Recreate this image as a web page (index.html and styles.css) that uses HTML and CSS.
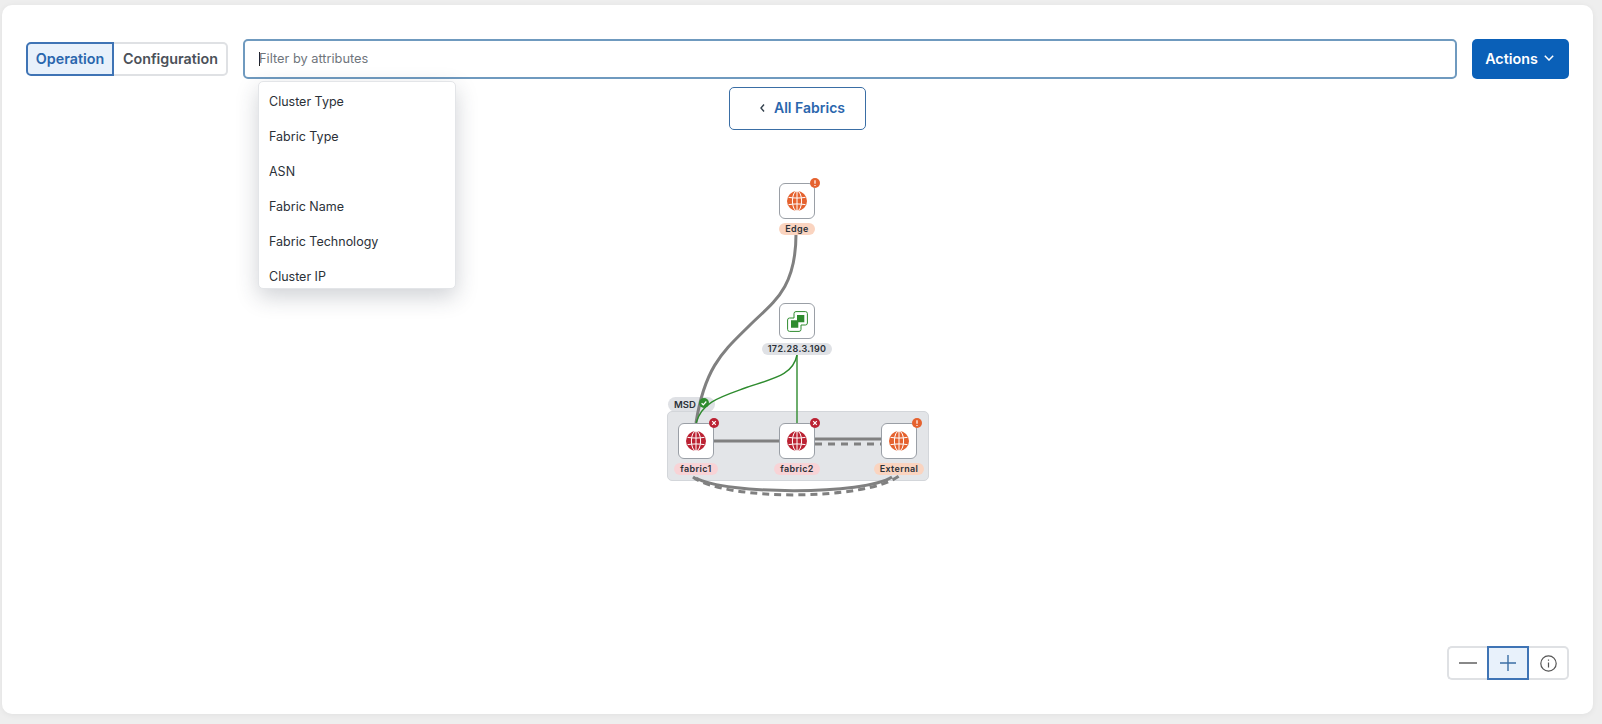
FILE: index.html
```html
<!DOCTYPE html>
<html lang="en">
<head>
  <meta charset="UTF-8" />
  <title>Fabrics topology</title>
  <link rel="stylesheet" href="styles.css">
</head>
<body>
  <svg class="defs" width="0" height="0">
    <symbol id="globe" viewBox="0 0 20 20">
      <circle cx="10" cy="10" r="10" fill="currentColor"/>
      <g fill="none" stroke="#fff" stroke-width="1">
        <ellipse cx="10" cy="10" rx="4.600" ry="10"/>
        <path d="M10 0v20M1.500 6.300c5 1 12 1 17 0M1.500 13.700c5-1 12-1 17 0"/>
      </g>
    </symbol>
    <symbol id="badge-x" viewBox="0 0 10 10">
      <circle cx="5" cy="5" r="5" fill="#bb2233"/>
      <path d="M3.200 3.200l3.600 3.600M6.800 3.200l-3.600 3.600" stroke="#fff" stroke-width="1.200"/>
    </symbol>
    <symbol id="badge-warn" viewBox="0 0 10 10">
      <circle cx="5" cy="5" r="5" fill="#e5622f"/>
      <path d="M5 2.200v3.600M5 6.900v1.100" stroke="#fff" stroke-width="1.200"/>
    </symbol>
  </svg>

  <main class="card">
    <div class="toolbar">
      <div class="segmented">
        <button class="seg seg-active">Operation</button>
        <button class="seg">Configuration</button>
      </div>
      <div class="filter">
        <span class="caret"></span>
        <span class="placeholder">Filter by attributes</span>
      </div>
      <button class="actions">
        Actions
        <svg width="10" height="6" viewBox="0 0 10 6"><path d="M.8 .8L5 5l4.200-4.200" fill="none" stroke="#fff" stroke-width="1.500"/></svg>
      </button>
    </div>

    <ul class="menu">
      <li>Cluster Type</li>
      <li>Fabric Type</li>
      <li>ASN</li>
      <li>Fabric Name</li>
      <li>Fabric Technology</li>
      <li>Cluster IP</li>
    </ul>

    <div class="back-row">
      <button class="back">
        <svg width="5" height="8" viewBox="0 0 5 8"><path d="M4 .5L1 4l3 3.500" fill="none" stroke="#33404d" stroke-width="1.400"/></svg>
        All Fabrics
      </button>
    </div>

    <div class="canvas">
      <div class="group-tag">MSD</div>
      <div class="group"></div>

      <svg class="links" viewBox="2 5 1591 709">
        <g fill="none" stroke="#808080" stroke-width="3">
          <path d="M796 234C796 290 772 303 750 325C725 350 705 365 696 423"/>
          <path d="M714 441H780"/>
          <path d="M815 439H881"/>
          <path d="M815 444H881" stroke-dasharray="7 6"/>
          <path d="M696 478C725 495 865 495 892 477"/>
          <path d="M693 477C725 501 865 501 899 476" stroke-dasharray="7 5"/>
        </g>
        <g fill="none" stroke="#2e8b2e" stroke-width="1.400">
          <path d="M797 355V423"/>
          <path d="M797 355C793 375 775 378 745 388C720 397 702 402 696 423"/>
        </g>
      </svg>

      <svg class="tag-check" viewBox="0 0 10 10">
        <circle cx="5" cy="5" r="5" fill="#2e8b2e"/>
        <path d="M2.600 5.200l1.700 1.600 3-3.300" fill="none" stroke="#fff" stroke-width="1.200"/>
      </svg>

      <div class="node node-edge">
        <div class="box box-warn">
          <svg class="globe"><use href="#globe"/></svg>
          <svg class="badge"><use href="#badge-warn"/></svg>
        </div>
        <span class="label label-warn">Edge</span>
      </div>

      <div class="node node-vcenter">
        <div class="box">
          <svg class="vc" viewBox="0 0 21 21">
            <path d="M9 .6h9.400a2 2 0 0 1 2 2V12a2 2 0 0 1-2 2H14v4.400a2 2 0 0 1-2 2H2.600a2 2 0 0 1-2-2V9a2 2 0 0 1 2-2H7V2.600a2 2 0 0 1 2-2z" fill="#fff" stroke="#2e8b2e" stroke-width="1"/>
            <path d="M10 4h7.300v7.300H11.300v5.400H4V9.300h6z" fill="#2e8b2e"/>
          </svg>
        </div>
        <span class="label label-grey">172.28.3.190</span>
      </div>

      <div class="node node-fabric1">
        <div class="box box-err">
          <svg class="globe"><use href="#globe"/></svg>
          <svg class="badge"><use href="#badge-x"/></svg>
        </div>
        <span class="label label-err">fabric1</span>
      </div>

      <div class="node node-fabric2">
        <div class="box box-err">
          <svg class="globe"><use href="#globe"/></svg>
          <svg class="badge"><use href="#badge-x"/></svg>
        </div>
        <span class="label label-err">fabric2</span>
      </div>

      <div class="node node-external">
        <div class="box box-warn">
          <svg class="globe"><use href="#globe"/></svg>
          <svg class="badge"><use href="#badge-warn"/></svg>
        </div>
        <span class="label label-warn">External</span>
      </div>
    </div>

    <div class="zoom">
      <button class="zoom-btn">
        <svg width="18" height="2" viewBox="0 0 18 2"><path d="M0 1h18" stroke="#555" stroke-width="1.400"/></svg>
      </button>
      <button class="zoom-btn zoom-active">
        <svg width="16" height="16" viewBox="0 0 16 16"><path d="M0 8h16M8 0v16" stroke="#3a6ea5" stroke-width="1.400"/></svg>
      </button>
      <button class="zoom-btn">
        <svg width="17" height="17" viewBox="0 0 17 17"><circle cx="8.500" cy="8.500" r="7.700" fill="none" stroke="#555" stroke-width="1.200"/><path d="M8.500 7.500v5M8.500 4.500v1.300" stroke="#555" stroke-width="1.200"/></svg>
      </button>
    </div>
  </main>
</body>
</html>
```

FILE: styles.css
```css
* {
  box-sizing: border-box;
}
body {
  margin: 0;
  height: 724px;
  overflow: hidden;
  background: #eeeeee;
  font-family: Inter, "Liberation Sans", sans-serif;
  color: #2b3138;
}
button {
  font-family: inherit;
  cursor: pointer;
}
.defs {
  position: absolute;
}
.card {
  position: relative;
  height: 709px;
  margin: 5px 9px 0 2px;
  padding: 34px 24px 0;
  background: #fff;
  border-radius: 10px;
  box-shadow: 0 1px 6px rgba(0, 0, 0, 0.06);
}
.toolbar {
  display: flex;
  align-items: center;
  gap: 15px;
  height: 40px;
}
.segmented {
  display: flex;
  height: 34px;
}
.seg {
  width: 114px;
  padding: 0 0 2px 1px;
  font-size: 14.300px;
  font-weight: 600;
  color: #4b5159;
  background: #fff;
  border: 2px solid #dfe1e4;
  border-left: none;
  border-radius: 0 5px 5px 0;
}
.seg-active {
  width: 88px;
  padding: 0 0 2px;
  color: #2a66ad;
  background: #e8f1fb;
  border: 2px solid #3f74b5;
  border-radius: 5px 0 0 5px;
}
.filter {
  flex: 1;
  display: flex;
  align-items: center;
  height: 40px;
  padding: 0 0 1px 14px;
  border: 2px solid #6f9abf;
  border-radius: 5px;
}
.caret {
  width: 1px;
  height: 14px;
  margin-right: -1px;
  background: #222;
}
.placeholder {
  font-size: 12.800px;
  color: #6f757c;
}
.actions {
  display: flex;
  align-items: center;
  justify-content: center;
  gap: 6px;
  width: 97px;
  height: 40px;
  padding: 0 2px 2px 0;
  font-size: 14.300px;
  font-weight: 600;
  color: #fff;
  background: #0a60b8;
  border: none;
  border-radius: 5px;
}
.menu {
  position: absolute;
  left: 256px;
  top: 76px;
  z-index: 2;
  width: 198px;
  height: 208px;
  margin: 0;
  padding: 2px 0 0 10px;
  overflow: hidden;
  list-style: none;
  font-size: 12.500px;
  background: #fff;
  border: 1px solid #e3e5e8;
  border-radius: 5px;
  box-shadow: 0 8px 22px rgba(40, 50, 70, 0.22);
}
.menu li {
  height: 35px;
  line-height: 35px;
}
.back-row {
  display: flex;
  justify-content: center;
  margin-top: 8px;
}
.back {
  display: flex;
  align-items: center;
  gap: 9px;
  width: 137px;
  height: 43px;
  padding: 0 0 2px 30px;
  font-size: 14px;
  font-weight: 600;
  color: #2a66ad;
  background: #fff;
  border: 1px solid #3a6ea5;
  border-radius: 5px;
}
.canvas {
  position: absolute;
  inset: 0;
  pointer-events: none;
}
.links {
  position: absolute;
  inset: 0;
  width: 100%;
  height: 100%;
}
.group {
  position: absolute;
  left: 665px;
  top: 406px;
  width: 262px;
  height: 70px;
  background: #e3e5e8;
  border: 1px solid #d3d6da;
  border-radius: 5px;
}
.group-tag {
  position: absolute;
  left: 666px;
  top: 392px;
  width: 47px;
  height: 15px;
  padding-left: 6px;
  font-size: 9.500px;
  font-weight: 600;
  line-height: 15px;
  background: #dfe1e5;
  border-radius: 8px;
}
.tag-check {
  position: absolute;
  left: 697px;
  top: 393px;
  width: 10px;
  height: 10px;
}
.node {
  position: absolute;
  display: flex;
  flex-direction: column;
  align-items: center;
  gap: 4px;
  width: 90px;
}
.node-edge {
  left: 750px;
  top: 178px;
}
.node-vcenter {
  left: 750px;
  top: 298px;
}
.node-fabric1 {
  left: 649px;
  top: 418px;
}
.node-fabric2 {
  left: 750px;
  top: 418px;
}
.node-external {
  left: 852px;
  top: 418px;
}
.box {
  position: relative;
  display: flex;
  align-items: center;
  justify-content: center;
  width: 36px;
  height: 36px;
  background: #fff;
  border: 1px solid #9a9fa6;
  border-radius: 6px;
}
.box-warn {
  color: #e5622f;
}
.box-err {
  color: #bb2233;
}
.globe {
  width: 20px;
  height: 20px;
}
.vc {
  width: 21px;
  height: 21px;
}
.badge {
  position: absolute;
  top: -6px;
  right: -6px;
  width: 10px;
  height: 10px;
}
.label {
  padding: 0 6px;
  font-size: 9px;
  font-weight: 600;
  letter-spacing: 0.35px;
  line-height: 12px;
  white-space: nowrap;
  border-radius: 6px;
}
.label-warn {
  background: #fad4c0;
}
.label-err {
  background: #f8d3d6;
}
.label-grey {
  background: #dfe1e5;
}
.zoom {
  position: absolute;
  left: 1445px;
  top: 641px;
  display: flex;
  width: 122px;
  height: 34px;
}
.zoom-btn {
  flex: 1;
  display: flex;
  align-items: center;
  justify-content: center;
  padding: 0;
  background: #fff;
  border: 2px solid #dfe1e4;
  border-left: none;
  border-right: none;
}
.zoom-btn:first-child {
  border-left: 2px solid #dfe1e4;
  border-radius: 5px 0 0 5px;
}
.zoom-btn:last-child {
  border-right: 2px solid #dfe1e4;
  border-radius: 0 5px 5px 0;
}
.zoom-active {
  background: #e8f1fb;
  border: 2px solid #3f74b5;
}
```
